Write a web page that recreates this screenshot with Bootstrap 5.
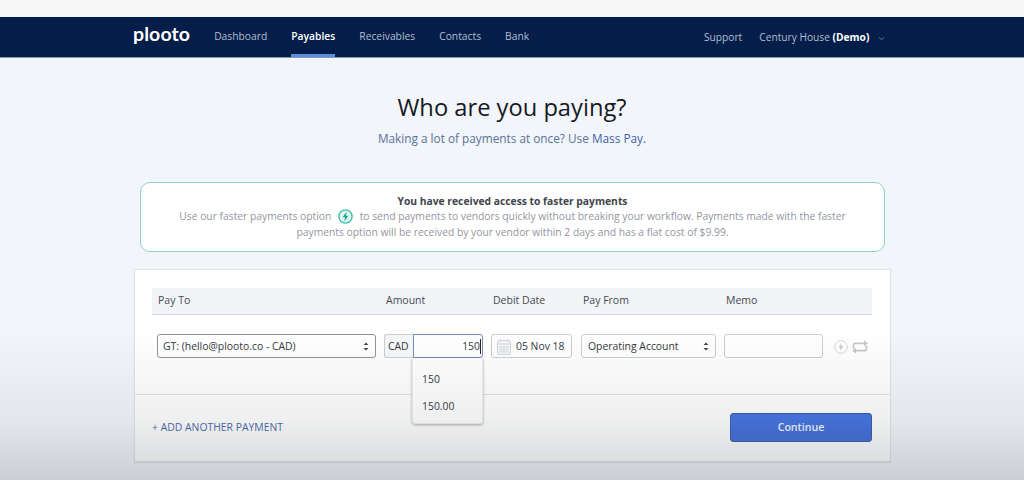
<!DOCTYPE html>
<html lang="en">
  <head>
    <title>Plooto - Who are you paying?</title>
    <link href="https://cdn.jsdelivr.net/npm/bootstrap@5.3.3/dist/css/bootstrap.min.css" rel="stylesheet" />
    <style>
      html, body { height: 480px; overflow: hidden; }
      body {
        position: relative;
        padding-top: 17px;
        background: #f2f5fa;
        font-family: "Open Sans", "Liberation Sans", sans-serif;
        font-size: 11px;
        color: #3a3f47;
      }
      /* strip above the navbar */
      .top-strip { position: absolute; top: 0; left: 0; right: 0; height: 17px; background: #f6f6f6; }
      /* the grey fade that lies over the bottom of the picture */
      .bottom-fade {
        position: absolute; left: 0; right: 0; top: 330px; bottom: 0; z-index: 5;
        pointer-events: none;
        background: linear-gradient(to bottom, rgba(120,125,130,0) 0%, rgba(120,125,130,.12) 60%, rgba(120,125,130,.32) 100%);
      }
      .app-bar { height: 41px; padding: 0 0 0 133px; background: #041d49; border-bottom: 1px solid #8b98ae; flex-wrap: nowrap; }
      .app-logo { font-family: Lato, "Open Sans", sans-serif; font-weight: 700; font-size: 19.5px; line-height: 1; color: #fff; letter-spacing: .1px; margin-right: 24px; padding-bottom: 6px; }
      .app-links { gap: 24px; align-self: flex-start; }
      .app-links a { display: block; height: 40px; line-height: 39px; font-size: 10.3px; color: #b3bfd2; text-decoration: none; }
      .app-links a.current { color: #fff; font-weight: 600; border-bottom: 3px solid #5b8be2; }
      .app-right { margin-left: auto; padding-right: 139px; padding-top: 1px; gap: 17px; font-size: 10.2px; color: #b3bfd2; }
      .app-right b { color: #fff; font-weight: 700; }
      .app-chevron { margin-left: 6px; }
      .page-title { font-size: 23.7px; font-weight: 400; color: #16191f; line-height: 32px; margin: 33px 0 0; }
      .page-sub { font-size: 11.8px; color: #5a7296; line-height: 18px; margin: 6px 0 0; }
      .page-sub a { color: #3f63ad; text-decoration: none; }
      .notice {
        width: 745px; height: 70px; margin: 35px 0 0 140px; padding-top: 11px;
        background: #fff; border: 1px solid #8fd0c6; border-radius: 10px;
        text-align: center; font-size: 10.3px; line-height: 16px; color: #92969e;
      }
      .notice strong { display: block; color: #41454c; font-weight: 700; line-height: 14px; }
      .bolt-badge { display: inline-block; vertical-align: -4px; margin: 0 4px; }
      .pay-panel { width: 757px; height: 193px; margin: 17px 0 0 134px; background: #fff; border: 1px solid #dde3ea; box-shadow: 0 1px 1px rgba(0,0,0,.08); }
      .pay-grid { display: grid; grid-template-columns: 228px 107px 90px 143px 110px 1fr; }
      .pay-head { height: 27px; margin: 18px 18px 0 17px; padding-left: 6px; background: #f2f4f7; border-bottom: 1px solid #d5dae1; line-height: 25px; font-size: 10.5px; color: #454a52; }
      .pay-row { grid-template-columns: 227px 107px 90px 143px 110px 1fr; margin: 19px 18px 0 22px; height: 24px; align-items: center; }
      .fake-field {
        display: flex; align-items: center; height: 24px; padding: 1px 6px 0; background: #fff;
        border: 1px solid #c9ced5; border-radius: 3px; font-size: 10.4px; color: #33373e; white-space: nowrap;
      }
      .fake-field.strong-edge { border-color: #8b9099; }
      .updown { margin-left: auto; }
      .w-payto { width: 219px; padding-left: 5px; }
      .amount-wrap { position: relative; display: flex; width: 99px; }
      .cad-box { width: 29px; padding-left: 3px; background: #f6f7f8; border-right: 0; border-radius: 3px 0 0 3px; color: #33373e; }
      .amount-box { width: 71px; justify-content: flex-end; padding: 1px 1px 0 0; border: 1px solid #6f8cc0; border-radius: 0 3px 3px 0; }
      .caret-line { display: inline-block; width: 1px; height: 15px; background: #222; margin-left: 0; }
      .suggest-menu {
        position: absolute; top: 24px; left: 28px; width: 71px; height: 66px; z-index: 4;
        padding: 0 0 0 9px; background: #fff; border: 1px solid #eceef0; border-top: 0; border-radius: 0 0 3px 3px;
        box-shadow: 0 1px 3px rgba(0,0,0,.35);
        font-size: 10.4px; color: #2f3238;
      }
      .suggest-menu div { height: 27px; line-height: 27px; }
      .suggest-menu div:first-child { margin-top: 8px; }
      .w-date { width: 81px; padding: 1px 0 0 5px; gap: 5px; }
      .w-from { width: 135px; padding-left: 6px; }
      .w-memo { width: 99px; }
      .row-icons { display: flex; align-items: center; gap: 3px; padding-top: 1px; }
      .pay-foot { margin-top: 36px; border-top: 1px solid #dfe2e6; height: 66px; padding: 18px 18px 0 17px; }
      .add-link { font-size: 10.4px; color: #3f5fa6; text-decoration: none; line-height: 29px; }
      .continue-btn {
        width: 142px; height: 29px; padding: 0; background: linear-gradient(#3d6fe4, #3563d4);
        border: 1px solid #2f549f; border-radius: 3px; font-size: 10.6px; font-weight: 600; color: #f3f6fc;
      }
    </style>
  </head>
  <body>
    <div class="top-strip"></div>

    <nav class="navbar app-bar">
      <span class="app-logo">plooto</span>
      <div class="d-flex app-links">
        <a href="#">Dashboard</a>
        <a href="#" class="current">Payables</a>
        <a href="#">Receivables</a>
        <a href="#">Contacts</a>
        <a href="#">Bank</a>
      </div>
      <div class="d-flex align-items-center app-right">
        <span>Support</span>
        <span>Century House <b>(Demo)</b>
          <svg class="app-chevron" width="7" height="5" viewBox="0 0 7 5"><path d="M1 1.2l2.5 2.5L6 1.2" fill="none" stroke="#7f8ea8" stroke-width=".8" /></svg>
        </span>
      </div>
    </nav>

    <div class="text-center">
      <h1 class="page-title">Who are you paying?</h1>
      <p class="page-sub">Making a lot of payments at once? Use <a href="#">Mass Pay.</a></p>
    </div>

    <div class="notice">
      <strong>You have received access to faster payments</strong>
      Use our faster payments option
      <svg class="bolt-badge" width="15" height="15" viewBox="0 0 15 15">
        <circle cx="7.5" cy="7.5" r="6.6" fill="#e4f6f3" stroke="#3fbfa8" stroke-width="1.4" />
        <path d="M8.800 2.600L4.600 8.300h2.500L6.200 12.500l4.200-5.800H7.900z" fill="#12a88e" />
      </svg>
      to send payments to vendors quickly without breaking your workflow. Payments made with the faster<br />
      payments option will be received by your vendor within 2 days and has a flat cost of $9.99.
    </div>

    <div class="pay-panel">
      <div class="pay-grid pay-head">
        <span>Pay To</span>
        <span>Amount</span>
        <span>Debit Date</span>
        <span>Pay From</span>
        <span>Memo</span>
      </div>

      <div class="pay-grid pay-row">
        <div class="fake-field strong-edge w-payto">
          GT: (hello@plooto.co - CAD)
          <svg class="updown" width="6" height="9" viewBox="0 0 6 9"><path d="M3 .5L5.4 3H.6zM3 8.5L.6 6h4.8z" fill="#3a3f47" /></svg>
        </div>
        <div class="amount-wrap">
          <div class="fake-field cad-box">CAD</div>
          <div class="fake-field amount-box">150<span class="caret-line"></span></div>
          <div class="suggest-menu">
            <div>150</div>
            <div>150.00</div>
          </div>
        </div>
        <div class="fake-field w-date">
          <svg width="14" height="16" viewBox="0 0 14 16">
            <rect x=".5" y="1.5" width="13" height="14" rx="1.5" fill="#f5f6f7" stroke="#d3d6db" />
            <path d="M.5 5h13" stroke="#d3d6db" />
            <path d="M2.500 7h9v6.500h-9z" fill="#dfe1e5" />
            <path d="M2.500 9.200h9M2.500 11.400h9M5.500 7v6.500M8.500 7v6.500" stroke="#f5f6f7" stroke-width=".6" />
            <path d="M3.500 0v3M10.500 0v3" stroke="#d3d6db" />
          </svg>
          05 Nov 18
        </div>
        <div class="fake-field w-from">
          Operating Account
          <svg class="updown" width="6" height="9" viewBox="0 0 6 9"><path d="M3 .5L5.4 3H.6zM3 8.5L.6 6h4.800z" fill="#3a3f47" /></svg>
        </div>
        <div class="fake-field w-memo"></div>
        <div class="row-icons">
          <svg width="14" height="14" viewBox="0 0 14 14">
            <circle cx="7" cy="7" r="6.300" fill="none" stroke="#d3d6da" />
            <path d="M7.900 2.800L4.500 7.600h2.200L5.900 11.200l3.500-5H7.100z" fill="#bfc3c9" />
          </svg>
          <svg width="18" height="14" viewBox="0 0 18 14">
            <path d="M2.500 8.500V5a1.700 1.700 0 0 1 1.700-1.700H14M15.500 5.500V9a1.700 1.700 0 0 1-1.700 1.700H4" fill="none" stroke="#c3c7cc" stroke-width="1.700" />
            <path d="M13 .4L16.800 3.300 13 6.200zM5 7.800L1.200 10.700 5 13.600z" fill="#c3c7cc" />
          </svg>
        </div>
      </div>

      <div class="d-flex justify-content-between align-items-start pay-foot">
        <a href="#" class="add-link">+ ADD ANOTHER PAYMENT</a>
        <button type="button" class="btn continue-btn">Continue</button>
      </div>
    </div>

    <div class="bottom-fade"></div>
  </body>
</html>
